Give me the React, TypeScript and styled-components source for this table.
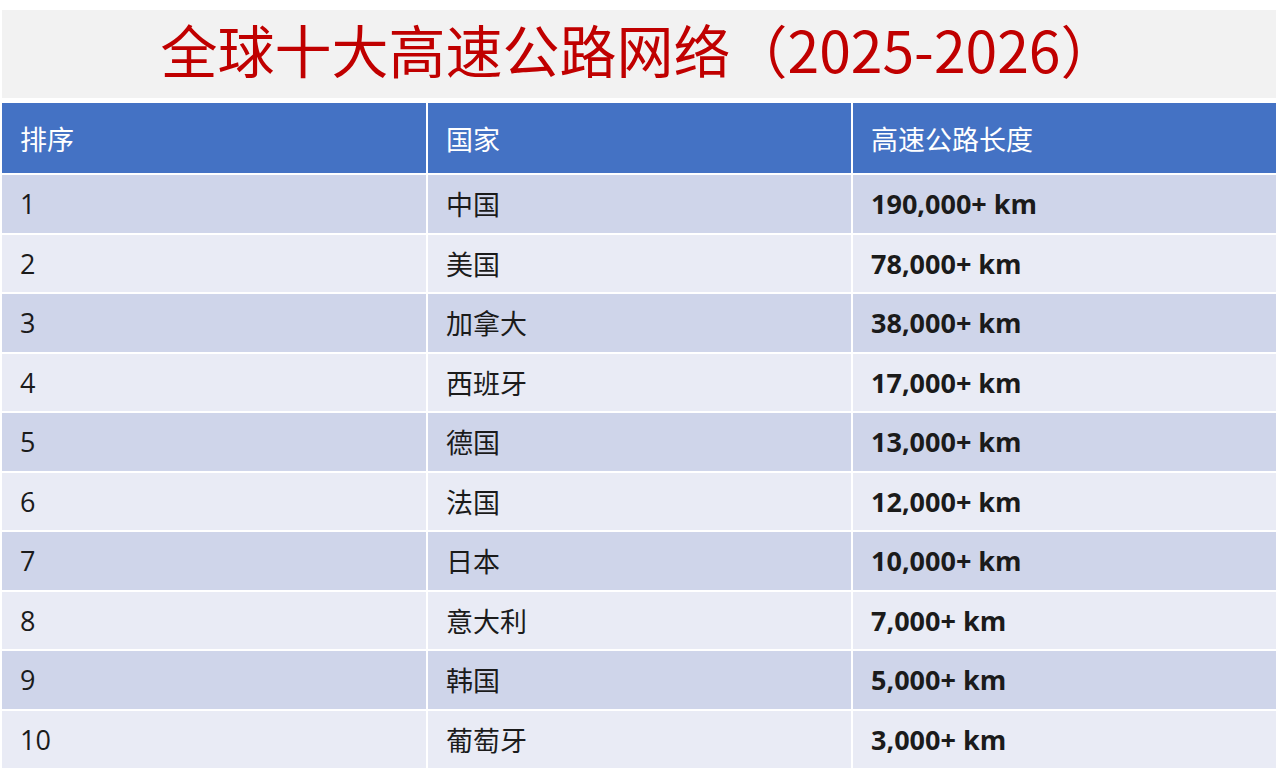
import styled, { createGlobalStyle } from 'styled-components'

const GlobalStyle = createGlobalStyle`
    html, body {
        margin: 0;
        background: #ffffff;
    }
`

const Page = styled.div`
    padding: 10px 4px 0 2px;
    font-family: 'Open Sans', 'Noto Sans CJK SC', sans-serif;
`

const TitleBar = styled.div`
    align-items: center;
    background: #f2f2f2;
    box-sizing: border-box;
    display: flex;
    height: 88px;
    justify-content: center;
    margin-bottom: 5px;
    padding-bottom: 12px;
`

const Title = styled.h1`
    color: #c00000;
    font-family: 'Noto Sans CJK SC', sans-serif;
    font-size: 57px;
    font-weight: 400;
    line-height: 1;
    margin: 0;
`

const Table = styled.div`
    display: grid;
    gap: 2px;
    grid-template-columns: 424px 423px 423px;
`

const Cell = styled.div<{ $tone: 'head' | 'dark' | 'light'; $bold?: boolean }>`
    align-items: center;
    background: ${(p) => (p.$tone === 'head' ? '#4472c4' : p.$tone === 'dark' ? '#cfd5ea' : '#e9ebf5')};
    color: ${(p) => (p.$tone === 'head' ? '#ffffff' : '#1b1b1b')};
    display: flex;
    font-size: 27px;
    font-weight: ${(p) => (p.$bold ? 700 : 400)};
    height: ${(p) => (p.$tone === 'head' ? '70px' : '57.5px')};
    padding-left: 18px;
`

const rows: [string, string, string][] = [
    ['1', '中国', '190,000+ km'],
    ['2', '美国', '78,000+ km'],
    ['3', '加拿大', '38,000+ km'],
    ['4', '西班牙', '17,000+ km'],
    ['5', '德国', '13,000+ km'],
    ['6', '法国', '12,000+ km'],
    ['7', '日本', '10,000+ km'],
    ['8', '意大利', '7,000+ km'],
    ['9', '韩国', '5,000+ km'],
    ['10', '葡萄牙', '3,000+ km'],
]

function App() {
    return (
        <Page>
            <GlobalStyle />
            <TitleBar>
                <Title>全球十大高速公路网络（2025-2026）</Title>
            </TitleBar>
            <Table>
                <Cell $tone="head">排序</Cell>
                <Cell $tone="head">国家</Cell>
                <Cell $tone="head">高速公路长度</Cell>
                {rows.map(([rank, country, length], i) => {
                    const tone = i % 2 === 0 ? 'dark' : 'light'
                    return [
                        <Cell key={rank + 'a'} $tone={tone}>{rank}</Cell>,
                        <Cell key={rank + 'b'} $tone={tone}>{country}</Cell>,
                        <Cell key={rank + 'c'} $tone={tone} $bold>{length}</Cell>,
                    ]
                })}
            </Table>
        </Page>
    )
}

export default App
